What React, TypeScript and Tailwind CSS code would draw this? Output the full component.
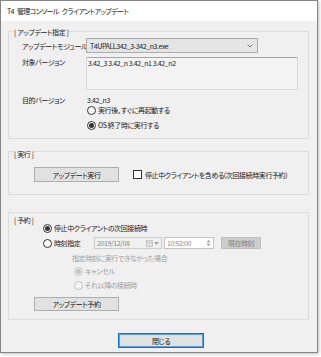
import React from 'react';

type RadioProps = { checked?: boolean; disabled?: boolean };

const Radio = ({ checked = false, disabled = false }: RadioProps) => (
  <span
    className={`flex h-[9px] w-[9px] shrink-0 items-center justify-center rounded-full border ${
      disabled ? 'border-[#c2c2c2] bg-[#f4f4f4]' : 'border-[#333333] bg-white'
    }`}
  >
    {checked && (
      <span className={`h-[5px] w-[5px] rounded-full ${disabled ? 'bg-[#c2c2c2]' : 'bg-[#333333]'}`} />
    )}
  </span>
);

const App = () => {
  return (
    <div className="h-[357px] w-[321px] bg-white font-['Noto_Sans_CJK_JP','Noto_Sans',sans-serif] text-[7px] leading-[10px] tracking-[-0.4px] text-[#1a1a1a] [font-feature-settings:'palt']">
      <div className="flex h-[353px] w-[318px] flex-col border border-[#858585] bg-[#f0f0f0] shadow-[1px_1px_3px_rgba(0,0,0,0.25)]">
        {/* title bar */}
        <div className="flex h-[20px] shrink-0 items-center gap-[3px] bg-white pl-[6px] tracking-[-0.6px]">
          <span>T4</span>
          <span>管理コンソール</span>
          <span>クライアントアップデート</span>
        </div>

        <div className="flex flex-col pl-[7px]">
          {/* アップデート指定 */}
          <section className="mt-[10px] flex h-[108px] w-[301px] flex-col border border-[#dcdcdc]">
            <div className="-mt-[5px] ml-[5px] w-fit bg-[#f0f0f0]">[ アップデート指定 ]</div>

            <div className="mt-[1px] flex h-[15px] items-center">
              <span className="ml-[13px] w-[64px] whitespace-nowrap">アップデートモジュール</span>
              <div className="flex h-[15px] w-[172px] items-center justify-between border border-[#acacac] bg-[#e5e5e5] pl-[3px] pr-[4px]">
                <span>T4UPALL342_3-342_n3.exe</span>
                <svg width="6" height="4" viewBox="0 0 6 4">
                  <path d="M0.5 0.5 L3 3 L5.5 0.5" fill="none" stroke="#555" strokeWidth="0.8" />
                </svg>
              </div>
            </div>

            <div className="mt-[4px] flex h-[33px] items-start">
              <span className="ml-[13px] w-[64px]">対象バージョン</span>
              <div className="h-[33px] w-[212px] border border-[#dadada] border-t-[#a5a5a5] bg-[#f3f3f3] pl-[1px]">
                3.42_3 3.42_n 3.42_n1 3.42_n2
              </div>
            </div>

            <div className="mt-[5px] flex h-[10px] items-center">
              <span className="ml-[13px] w-[64px]">目的バージョン</span>
              <span className="pl-[1px]">3.42_n3</span>
            </div>

            <div className="flex h-[10px] items-center gap-[2px] pl-[78px]">
              <Radio />
              <span>実行後、すぐに再起動する</span>
            </div>
            <div className="mt-[5px] flex h-[10px] items-center gap-[2px] pl-[78px]">
              <Radio checked />
              <span>OS 終了時に実行する</span>
            </div>
          </section>

          {/* 実行 */}
          <section className="mt-[12px] flex h-[44px] w-[301px] flex-col border border-[#dcdcdc]">
            <div className="-mt-[3px] ml-[5px] w-fit bg-[#f0f0f0]">[ 実行 ]</div>
            <div className="mt-[8px] flex h-[15px] items-center">
              <button type="button" className="ml-[25px] h-[15px] w-[85px] border border-[#adadad] bg-[#e1e1e1]">
                アップデート実行
              </button>
              <span className="ml-[14px] h-[9px] w-[9px] border border-[#333333] bg-white" />
              <span className="ml-[3px] whitespace-nowrap">停止中クライアントを含める(次回接続時実行予約)</span>
            </div>
          </section>

          {/* 予約 */}
          <section className="mt-[17px] flex h-[108px] w-[301px] flex-col border border-[#dcdcdc]">
            <div className="mt-[2px] ml-[5px] w-fit">[ 予約 ]</div>

            <div className="-mt-[2px] flex h-[10px] items-center gap-[2px] pl-[34px]">
              <Radio checked />
              <span>停止中クライアントの次回接続時</span>
            </div>

            <div className="mt-[4px] flex h-[12px] items-center pl-[34px]">
              <div className="flex w-[51px] items-center gap-[2px]">
                <Radio />
                <span>時刻指定</span>
              </div>
              <div className="flex h-[12px] w-[68px] items-center justify-between border border-[#cccccc] bg-[#f0f0f0] px-[2px] text-[#8a8a8a]">
                <span>2019/12/08</span>
                <span className="flex items-center gap-[1px]">
                  <svg width="7" height="7" viewBox="0 0 7 7">
                    <rect x="0.5" y="0.5" width="6" height="6" fill="#e2e2e2" stroke="#b4b4b4" strokeWidth="0.6" />
                    <path d="M0.5 2.3 H6.5" stroke="#b4b4b4" strokeWidth="0.6" />
                  </svg>
                  <svg width="5" height="3" viewBox="0 0 5 3">
                    <path d="M0 0 H5 L2.5 3Z" fill="#a5a5a5" />
                  </svg>
                </span>
              </div>
              <div className="ml-[2px] flex h-[12px] w-[50px] items-center justify-between border border-[#c4c4c4] bg-white px-[2px] text-[#8a8a8a]">
                <span>10:52:00</span>
                <svg width="5" height="8" viewBox="0 0 5 8">
                  <path d="M0.5 3.2 L2.5 1 L4.5 3.2Z M0.5 4.8 L2.5 7 L4.5 4.8Z" fill="#9a9a9a" />
                </svg>
              </div>
              <button
                type="button"
                className="ml-[7px] h-[12px] w-[40px] border border-[#bfbfbf] bg-[#cccccc] text-[#838383]"
              >
                現在時刻
              </button>
            </div>

            <div className="mt-[4px] h-[10px] pl-[63px] text-[#a0a0a0]">指定時刻に実行できなかった場合</div>

            <div className="mt-[3px] flex h-[10px] items-center gap-[2px] pl-[65px] text-[#a0a0a0]">
              <Radio checked disabled />
              <span>キャンセル</span>
            </div>
            <div className="mt-[4px] flex h-[10px] items-center gap-[2px] pl-[65px] text-[#a0a0a0]">
              <Radio disabled />
              <span>それ以降の接続時</span>
            </div>

            <div className="mt-[7px] flex">
              <button type="button" className="ml-[25px] h-[14px] w-[85px] border border-[#adadad] bg-[#e1e1e1]">
                アップデート予約
              </button>
            </div>
          </section>

          <div className="mt-[13px] flex">
            <button
              type="button"
              className="ml-[110px] h-[15px] w-[86px] border border-[#0078d7] bg-[#e1e1e1] shadow-[inset_0_0_0_1px_#5aa0e0]"
            >
              閉じる
            </button>
          </div>
        </div>
      </div>
    </div>
  );
};

export default App;
